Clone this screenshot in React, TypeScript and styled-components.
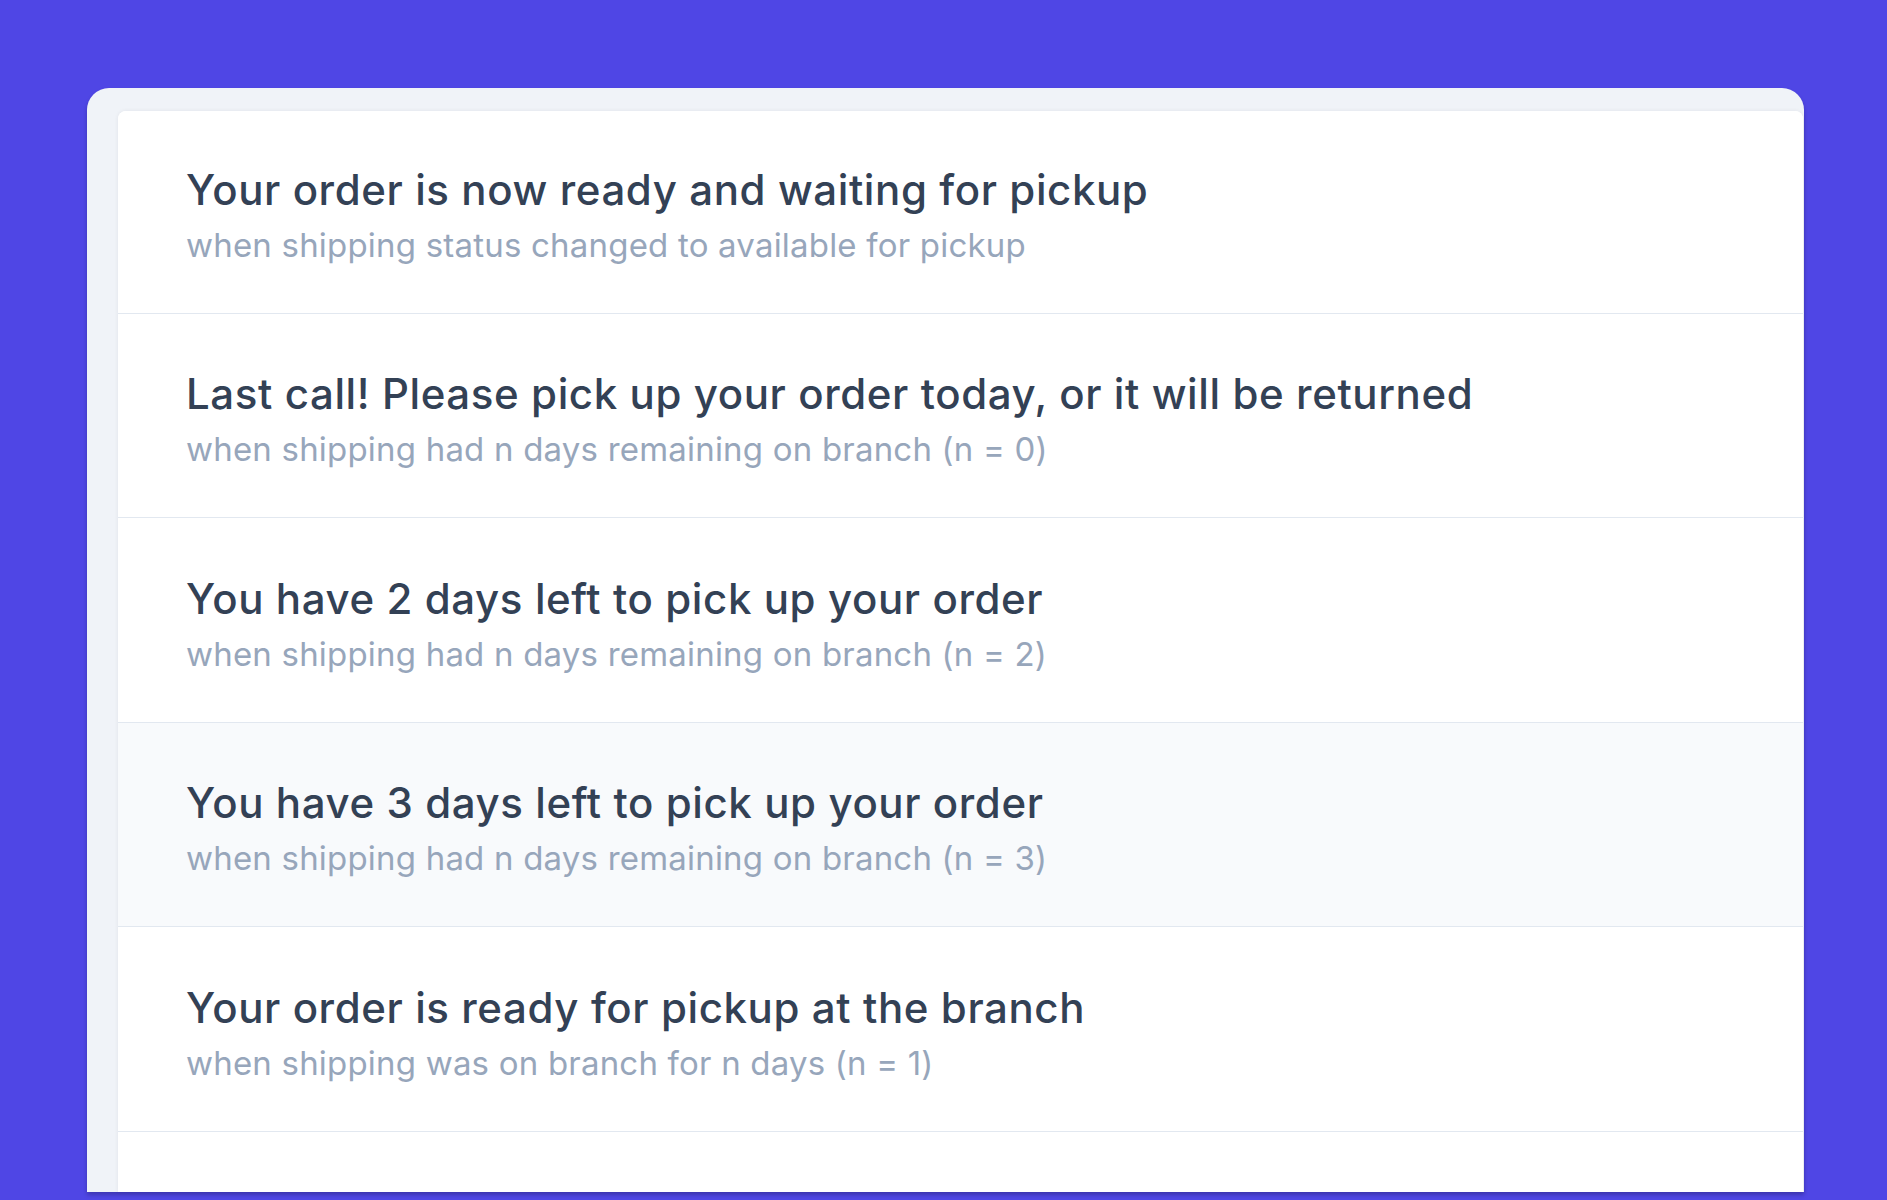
import React from 'react'
import styled, { createGlobalStyle } from 'styled-components'

const GlobalStyle = createGlobalStyle`
  html, body {
    margin: 0;
    padding: 0;
    background: #4f46e5;
    height: 1200px;
    overflow: hidden;
  }
  body {
    font-family: Inter, "Noto Sans", "Liberation Sans", sans-serif;
    -webkit-font-smoothing: antialiased;
  }
`

const Page = styled.div`
  height: 1200px;
  padding: 88px 0 0 87px;
  box-sizing: border-box;
`

const Frame = styled.div`
  width: 1717px;
  height: 1104px;
  box-sizing: border-box;
  padding: 23px 1px 0 31px;
  background: #f0f3f8;
  border-radius: 22px 22px 0 0;
  box-shadow: 0 3px 4px rgba(0, 0, 0, 0.22);
`

const Panel = styled.div`
  height: 100%;
  background: #ffffff;
  border-radius: 8px 8px 0 0;
  overflow: hidden;
  box-shadow: 0 0 4px rgba(15, 23, 42, 0.07);
`

const List = styled.ul`
  list-style: none;
  margin: 0;
  padding: 0;
`

const Row = styled.li<{ $active?: boolean }>`
  padding: 56.5px 68px 48px 68px;
  border-bottom: 1px solid #e2e8f0;
  background: ${(p) => (p.$active ? '#f8fafc' : '#ffffff')};

  &:first-child {
    padding-top: 54.5px;
  }
`

const Title = styled.div`
  font-size: 42px;
  line-height: 48px;
  font-weight: 500;
  color: #334155;
  letter-spacing: 0.6px;
  white-space: nowrap;
`

const Condition = styled.div`
  margin-top: 11px;
  font-size: 33px;
  line-height: 40px;
  font-weight: 400;
  color: #97a6bb;
  letter-spacing: 0.2px;
  white-space: nowrap;
`

const messages = [
  {
    title: 'Your order is now ready and waiting for pickup',
    condition: 'when shipping status changed to available for pickup',
  },
  {
    title: 'Last call! Please pick up your order today, or it will be returned',
    condition: 'when shipping had n days remaining on branch (n = 0)',
  },
  {
    title: 'You have 2 days left to pick up your order',
    condition: 'when shipping had n days remaining on branch (n = 2)',
  },
  {
    title: 'You have 3 days left to pick up your order',
    condition: 'when shipping had n days remaining on branch (n = 3)',
    active: true,
  },
  {
    title: 'Your order is ready for pickup at the branch',
    condition: 'when shipping was on branch for n days (n = 1)',
  },
]

export default function App() {
  return (
    <>
      <GlobalStyle />
      <Page>
        <Frame>
          <Panel>
            <List>
              {messages.map((m) => (
                <Row key={m.title} $active={m.active}>
                  <Title>{m.title}</Title>
                  <Condition>{m.condition}</Condition>
                </Row>
              ))}
            </List>
          </Panel>
        </Frame>
      </Page>
    </>
  )
}
